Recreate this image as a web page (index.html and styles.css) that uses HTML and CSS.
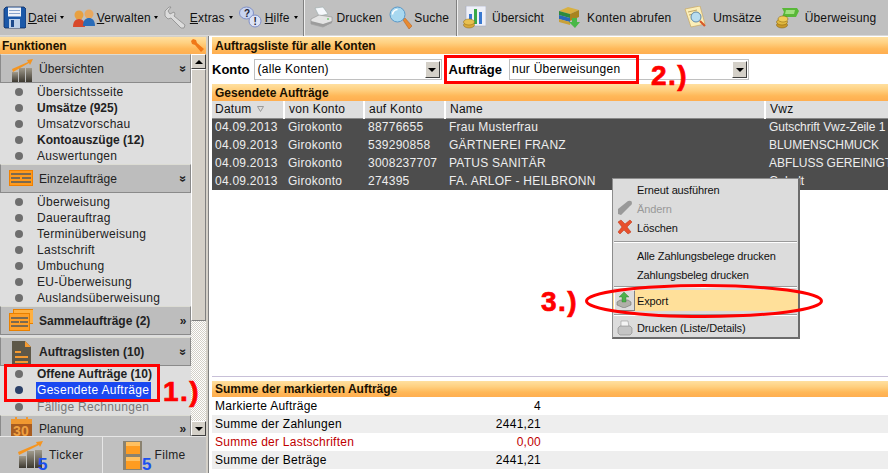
FILE: index.html
```html
<!DOCTYPE html>
<html lang="de">
<head>
<meta charset="utf-8">
<title>Auftragsliste</title>
<link rel="stylesheet" href="styles.css">
</head>
<body>
<div class="app">
  <header class="toolbar">
    <div class="tool t-datei"><svg class="ti" viewBox="0 0 23 23"><path d="M1 3l2-2h18l2 2v18l-1 1H2l-1-1z" fill="#1b58a8" stroke="#0c2c60" stroke-width=".8"/><rect x="5" y="1.500" width="13" height="9" fill="#eef2f8"/><rect x="6" y="4" width="11" height="1" fill="#88a4cc"/><rect x="6" y="7" width="11" height="1" fill="#88a4cc"/><rect x="6" y="13" width="11" height="9" fill="#bcd0e8"/><rect x="8" y="14" width="3" height="7" fill="#1c4a8c"/></svg><span><u>D</u>atei</span><i class="caret"></i></div>
    <div class="tool t-verw"><svg class="ti" viewBox="0 0 23 23"><circle cx="7" cy="9" r="4.500" fill="#e8a040"/><path d="M1 21c0-5 2-8 6-8s6 3 6 8z" fill="#d8482a"/><circle cx="17" cy="8" r="4.500" fill="#e8a860"/><path d="M11 20c0-6 3-8 6-8s6 2 6 8z" fill="#2a6cb8"/></svg><span><u>V</u>erwalten</span><i class="caret"></i></div>
    <div class="tool t-extras"><svg class="ti" viewBox="0 0 23 23"><path d="M1 5l4-4 2 0-3 4 2 3 4-2 1 2-1 2 11 9-1 3-3 0L7 12l-3 1-3-3z" fill="#dcdcdc" stroke="#8a8a8a" stroke-width=".8"/></svg><span><u>E</u>xtras</span><i class="caret"></i></div>
    <div class="tool t-hilfe"><svg class="ti" viewBox="0 0 23 23"><ellipse cx="7.500" cy="7" rx="7" ry="6" fill="#c8d4f0" stroke="#8090c8"/><text x="5" y="11" class="qm">?</text><ellipse cx="16" cy="15" rx="6" ry="6" fill="#dde4f6" stroke="#8090c8"/><text x="14.500" y="19" class="qm">!</text></svg><span><u>H</u>ilfe</span><i class="caret"></i></div>
    <i class="tsep"></i>
    <div class="tool t-druck"><svg class="ti" viewBox="0 0 23 23"><path d="M5 2l8-1 5 7-9 2z" fill="#f6f8fc" stroke="#9aa" stroke-width=".6"/><path d="M1 13l8-4 13 2v5l-9 5-12-3z" fill="#e4e4e4" stroke="#909090" stroke-width=".6"/><path d="M1 15l12 3 9-3v2l-9 4-12-3z" fill="#9c9c9c"/><rect x="17" y="12.500" width="2" height="1" fill="#40c040"/></svg><span>Drucken</span></div>
    <div class="tool t-suche"><svg class="ti" viewBox="0 0 23 23"><path d="M14 14l2-2 7 8-3 3z" fill="#e88a30" stroke="#b05818" stroke-width=".5"/><circle cx="8.500" cy="8.500" r="7.500" fill="#a8d8f0" stroke="#5a98c8"/><path d="M3.500 8.500a5 5 0 0 1 5-5" stroke="#fff" stroke-width="1.500" fill="none"/></svg><span>Suche</span></div>
    <i class="tsep tsep-2"></i>
    <div class="tool t-ueber"><svg class="ti" viewBox="0 0 23 23"><rect x="3" y="0" width="20" height="20" fill="#eef0f8" stroke="#a0a8c0" stroke-width=".6"/><rect x="6" y="8" width="3" height="10" fill="#3878d0"/><rect x="11" y="3" width="3" height="15" fill="#38a848"/><rect x="16" y="6" width="3" height="12" fill="#3878d0"/><ellipse cx="6" cy="19" rx="5.500" ry="3" fill="#d8a838" stroke="#906810" stroke-width=".5"/><ellipse cx="6" cy="16" rx="5.500" ry="3" fill="#e8c050" stroke="#906810" stroke-width=".5"/></svg><span>Übersicht</span></div>
    <div class="tool t-konten"><svg class="ti" viewBox="0 0 23 23"><path d="M1 5l9-4 11 3-9 4z" fill="#d8b040"/><path d="M1 5l11 3v4L1 9z" fill="#2f8a3c"/><path d="M1 9l11 3v4L1 13z" fill="#2a68b8"/><path d="M1 13l11 3v3L1 16z" fill="#c8a038"/><path d="M12 8l9-4v7l-9 4z" fill="#a88420"/><path d="M14 12h5v4h3l-5 6-6-6h3z" fill="#48b848"/></svg><span>Konten abrufen</span></div>
    <div class="tool t-umsatz"><svg class="ti" viewBox="0 0 23 23"><path d="M1 3l15-3 5 18-14 3z" fill="#fbeeb8" stroke="#c8a860" stroke-width=".7"/><path d="M4 6l9-2M5 9l4-1" stroke="#b09050" stroke-width=".8"/><circle cx="12" cy="11" r="5" fill="#b8dcf0" stroke="#6088a8"/><path d="M16 15l5 5" stroke="#d85828" stroke-width="2.200"/></svg><span>Umsätze</span></div>
    <div class="tool t-ueberw"><svg class="ti" viewBox="0 0 23 23"><path d="M6 2h15l2 3-3 6H6l2-5z" fill="#58b838"/><path d="M10 4h9l-1 4H9z" fill="#a0e080"/><ellipse cx="6" cy="19" rx="5.500" ry="3" fill="#c89828" stroke="#805c08" stroke-width=".5"/><ellipse cx="6" cy="16" rx="5.500" ry="3" fill="#e0b840" stroke="#805c08" stroke-width=".5"/><ellipse cx="7" cy="13" rx="5" ry="3" fill="#f0cc58" stroke="#805c08" stroke-width=".5"/></svg><span>Überweisung</span></div>
  </header>

  <div class="main">
    <aside class="side">
      <div class="band side-head"><span>Funktionen</span>
        <svg class="wrench" viewBox="0 0 13 13"><path d="M0 2l2-2 3 1 1 3 7 6-3 3-6-7-3-1z" fill="#f07818"/></svg>
      </div>
      <div class="side-body">
        <div class="nav">
          <div class="sect">
            <svg class="si" viewBox="0 0 24 26"><defs><linearGradient id="bar" x1="0" y1="0" x2="0" y2="1"><stop offset="0" stop-color="#a09a8c"/><stop offset="1" stop-color="#3c3830"/></linearGradient></defs><rect x="3" y="16" width="6" height="10" fill="url(#bar)"/><rect x="10" y="12" width="6" height="14" fill="url(#bar)"/><rect x="17" y="12" width="6" height="14" fill="url(#bar)"/><path d="M3 13L19 6l-1-2 6-1-3 6-1-2L4 16z" fill="#f59520"/></svg>
            <span>Übersichten</span><b class="chev">»</b>
          </div>
          <ul class="items">
            <li>Übersichtsseite</li>
            <li class="strong">Umsätze (925)</li>
            <li>Umsatzvorschau</li>
            <li class="strong">Kontoauszüge (12)</li>
            <li>Auswertungen</li>
          </ul>
          <div class="sect">
            <svg class="si" viewBox="0 0 24 26"><rect x=".5" y="4.500" width="23" height="15" fill="#ff9a1c" stroke="#f08000"/><rect x="2" y="7" width="20" height="2" fill="#7c6a50"/><rect x="2" y="11" width="9" height="2" fill="#7c6a50"/><rect x="13" y="11" width="9" height="2" fill="#7c6a50"/><rect x="2" y="15" width="20" height="2" fill="#7c6a50"/></svg>
            <span>Einzelaufträge</span><b class="chev">»</b>
          </div>
          <ul class="items items-long">
            <li>Überweisung</li>
            <li>Dauerauftrag</li>
            <li>Terminüberweisung</li>
            <li>Lastschrift</li>
            <li>Umbuchung</li>
            <li>EU-Überweisung</li>
            <li>Auslandsüberweisung</li>
          </ul>
          <div class="sect sect-bold">
            <svg class="si" viewBox="0 0 24 26"><rect x="4.500" y="1.500" width="20" height="14" fill="#ffb040" stroke="#e88000"/><rect x=".5" y="5.500" width="20" height="17" fill="#ff9f28" stroke="#e88000"/><rect x="2" y="9" width="17" height="2" fill="#7c6a50"/><rect x="2" y="13" width="8" height="2" fill="#7c6a50"/><rect x="11" y="13" width="8" height="2" fill="#7c6a50"/><rect x="2" y="17" width="17" height="2" fill="#7c6a50"/></svg>
            <span>Sammelaufträge (2)</span><b class="chev flat">»</b>
          </div>
          <div class="sect sect-bold sect-gap">
            <svg class="si" viewBox="0 0 24 26"><path d="M3 2h13l6 6v18H3z" fill="#5e5848"/><path d="M16 2l6 6h-6z" fill="#f59a30"/><rect x="6" y="12" width="6" height="2" fill="#f59a30"/><rect x="6" y="17" width="13" height="2" fill="#f59a30"/><rect x="6" y="22" width="13" height="2" fill="#f59a30"/></svg>
            <span>Auftragslisten (10)</span><b class="chev">»</b>
          </div>
          <ul class="items items-last">
            <li class="strong">Offene Aufträge (10)</li>
            <li class="selected"><span>Gesendete Aufträge</span></li>
            <li class="muted">Fällige Rechnungen</li>
          </ul>
          <div class="sect sect-cut">
            <svg class="si si-cal" viewBox="0 0 24 26"><rect x="2" y="3" width="21" height="23" fill="#a85c20"/><rect x="2" y="3" width="21" height="5" fill="#f09830"/><rect x="6" y="1" width="2" height="4" fill="#f09830"/><rect x="17" y="1" width="2" height="4" fill="#f09830"/><text x="4" y="20" class="cal">30</text></svg>
            <span>Planung</span><b class="chev flat">»</b>
          </div>
        </div>
        <div class="sbar">
          <div class="sbtn"><i class="up"></i></div>
          <div class="thumb"></div>
          <div class="track"></div>
          <div class="sbtn"><i class="down"></i></div>
        </div>
      </div>
      <div class="tabs">
        <div class="tab tab-a">
          <svg class="tabi" viewBox="0 0 30 32"><defs><linearGradient id="bar2" x1="0" y1="0" x2="0" y2="1"><stop offset="0" stop-color="#a09a8c"/><stop offset="1" stop-color="#3c3830"/></linearGradient></defs><rect x="1" y="17" width="7" height="12" fill="url(#bar2)"/><rect x="9" y="12" width="7" height="17" fill="url(#bar2)"/><rect x="17" y="11" width="7" height="18" fill="url(#bar2)"/><path d="M0 13L19 5l-1-2 7-1-3 6-1-2L1 16z" fill="#f59520"/><text x="20" y="31" class="five">5</text></svg>
          <span>Ticker</span>
        </div>
        <div class="tab tab-b">
          <svg class="tabi" viewBox="0 0 30 32"><rect x="0" y="2" width="19" height="29" fill="#8a8270"/><rect x="3" y="3" width="14" height="12" fill="#ff9c20"/><rect x="3" y="3" width="14" height="4" fill="#ffc060"/><rect x="3" y="18" width="14" height="12" fill="#ff9c20"/><rect x="3" y="18" width="14" height="4" fill="#ffc060"/><text x="19" y="31" class="five">5</text></svg>
          <span>Filme</span>
        </div>
      </div>
    </aside>

    <div class="split"></div>

    <main class="content">
      <div class="band">Auftragsliste für alle Konten</div>
      <div class="filter">
        <label class="flabel lab-k">Konto</label>
        <div class="combo combo-k"><span>(alle Konten)</span><i class="cbtn"></i></div>
        <label class="flabel lab-a">Aufträge</label>
        <div class="combo combo-a"><span>nur Überweisungen</span><i class="cbtn"></i></div>
      </div>
      <div class="band">Gesendete Aufträge</div>
      <table class="grid">
        <colgroup><col class="c1"><col class="c2"><col class="c3"><col class="c4"><col class="c5"></colgroup>
        <thead>
          <tr><th>Datum <svg class="sort" viewBox="0 0 7 6"><path d="M.5.500h6l-3 5z" fill="none" stroke="#999"/></svg></th><th>von Konto</th><th>auf Konto</th><th>Name</th><th>Vwz</th></tr>
        </thead>
        <tbody>
          <tr><td>04.09.2013</td><td>Girokonto</td><td>88776655</td><td>Frau Musterfrau</td><td>Gutschrift Vwz-Zeile 1</td></tr>
          <tr><td>04.09.2013</td><td>Girokonto</td><td>539290858</td><td>GÄRTNEREI FRANZ</td><td>BLUMENSCHMUCK</td></tr>
          <tr><td>04.09.2013</td><td>Girokonto</td><td>3008237707</td><td>PATUS SANITÄR</td><td>ABFLUSS GEREINIGT</td></tr>
          <tr><td>04.09.2013</td><td>Girokonto</td><td>274395</td><td>FA. ARLOF - HEILBRONN</td><td>Gehalt</td></tr>
        </tbody>
      </table>
      <div class="blank"></div>
      <div class="rule"></div>
      <div class="band band-sum">Summe der markierten Aufträge</div>
      <div class="sum">
        <div class="srow"><span>Markierte Aufträge</span><span class="val">4</span></div>
        <div class="srow alt"><span>Summe der Zahlungen</span><span class="val">2441,21</span></div>
        <div class="srow red"><span>Summe der Lastschriften</span><span class="val">0,00</span></div>
        <div class="srow alt"><span>Summe der Beträge</span><span class="val">2441,21</span></div>
      </div>
    </main>
  </div>

  <div class="menu">
    <div class="mi"><span>Erneut ausführen</span></div>
    <div class="mi off"><svg class="mic" viewBox="0 0 16 16"><path d="M1 14V9L11 1q4-1 4 2q0 2-2 3L4 15z" fill="#999"/></svg><span>Ändern</span></div>
    <div class="mi"><svg class="mic" viewBox="0 0 16 16"><path d="M1 3l3-2 4 4 5-4 2 2-5 5 4 5-3 2-4-4-4 4-2-2 4-5z" fill="#e8502c" stroke="#b83010" stroke-width=".5"/></svg><span>Löschen</span></div>
    <div class="msep s1"></div>
    <div class="mi"><span>Alle Zahlungsbelege drucken</span></div>
    <div class="mi"><span>Zahlungsbeleg drucken</span></div>
    <div class="msep s2"></div>
    <div class="mi hot"><i class="mbox"><svg class="mic" viewBox="0 0 16 16"><path d="M1 10l3-2h8l3 2v3l-7 3-7-3z" fill="#b0b0a8" stroke="#666" stroke-width=".5"/><path d="M8 0l5 5h-3v5H6V5H3z" fill="#4cb04c" stroke="#2a7a2a" stroke-width=".4"/></svg></i><span>Export</span></div>
    <div class="msep s3"></div>
    <div class="mi last"><svg class="mic" viewBox="0 0 16 16"><path d="M4 1h7l1 6H4z" fill="#f4f4f4" stroke="#888" stroke-width=".5"/><path d="M1 8l2-2h10l2 2v5l-2 2H3l-2-2z" fill="#c4c4c4" stroke="#777" stroke-width=".5"/></svg><span>Drucken (Liste/Details)</span></div>
  </div>

  <div class="mark mark-1"></div>
  <div class="mark mark-2"></div>
  <svg class="mark-3" viewBox="0 0 240 36"><ellipse cx="120" cy="18" rx="117.500" ry="15.500" fill="none" stroke="#f00" stroke-width="3"/></svg>
  <div class="step step-1">1.)</div>
  <div class="step step-2">2.)</div>
  <div class="step step-3">3.)</div>
</div>
</body>
</html>
```

FILE: styles.css
```css
* { box-sizing: border-box; }
html, body { margin: 0; padding: 0; height: 100%; overflow: hidden; }
body { font: 12px "Liberation Sans", Arial, sans-serif; color: #000; background: #fff; }
.app { position: relative; width: 888px; height: 473px; display: flex; flex-direction: column; overflow: hidden; }

/* toolbar */
.toolbar { height: 36px; flex: none; background: #c0c0c0; border-bottom: 1px solid #d8d8d8; display: flex; align-items: center; padding-left: 3px; font-size: 12px; letter-spacing: .15px; color: #111; white-space: nowrap; }
.tool { display: flex; align-items: center; gap: 2px; flex: none; }
.ti { width: 23px; height: 23px; flex: none; }
.caret { width: 0; height: 0; border: 2.500px solid transparent; border-top: 3px solid #000; border-bottom: 0; margin-left: 1px; }
.tsep { width: 2px; height: 36px; background: linear-gradient(90deg, #808080 50%, #eee 50%); flex: none; margin-left: 5px; }
.tsep-2 { margin-left: 7px; }
.t-verw { margin-left: 8px; }
.t-extras { margin-left: 6px; gap: 3px; }
.t-hilfe { margin-left: 6px; gap: 3px; }
.t-druck { margin-left: 5px; gap: 4px; }
.t-suche { margin-left: 7px; gap: 2px; }
.t-ueber { margin-left: 5px; gap: 6px; }
.t-konten { margin-left: 14px; gap: 6px; }
.t-umsatz { margin-left: 13px; gap: 6px; }
.t-ueberw { margin-left: 14px; gap: 6px; }
.qm { font: bold 10px "Liberation Sans", sans-serif; fill: #223; }
.cal { font: bold 14px "Liberation Sans", sans-serif; fill: #f0a040; }
.five { font: bold 17px "Liberation Sans", sans-serif; fill: #1a50f0; }

/* layout */
.main { flex: 1; min-height: 0; display: flex; background: #fff; }
.side { width: 206px; flex: none; display: flex; flex-direction: column; background: #d4d0c8; }
.split { width: 6px; flex: none; background: linear-gradient(90deg, #d4d0c8 0 2px, #808080 2px 3px, #fff 3px); }
.content { flex: 1; min-width: 0; display: flex; flex-direction: column; padding-top: 1px; }

/* bands */
.band { height: 17px; flex: none; padding-left: 3px; font-weight: bold; font-size: 12px; line-height: 18px; background: linear-gradient(180deg, #ffe0a0 0%, #ffd080 35%, #ffb858 70%, #ffae50 100%); color: #1a1000; }
.side-head { margin-top: 1px; display: flex; justify-content: space-between; align-items: center; padding-left: 2px; padding-right: 2px; }
.wrench { width: 13px; height: 13px; }

/* sidebar */
.side-body { flex: 1; min-height: 0; display: flex; }
.nav { width: 191px; flex: none; background: #dedede; overflow: hidden; }
.sect { height: 29px; background: #bdbdbd; border: 1px solid #8a8a8a; border-top-color: #dcdcd4; display: flex; align-items: center; font-size: 12px; letter-spacing: .1px; color: #222; padding-left: 8px; }
.sect span { flex: 1; padding-left: 6px; }
.si { width: 24px; height: 26px; flex: none; }
.chev { display: inline-block; transform: rotate(90deg); font-size: 12px; width: 10px; line-height: 10px; text-align: center; margin-right: 2px; }
.chev.flat { transform: none; }
.sect-bold { font-weight: bold; letter-spacing: 0; }
.sect-gap { margin-top: 2px; }
.sect-cut { height: 27px; margin-top: 0; border-bottom: 0; }
.items { list-style: none; margin: 0; padding: 1px 0 0 37px; height: 81px; }
.items-long { height: 113px; }
.items-last { height: 49px; padding-top: 0; }
.items li { height: 16px; line-height: 16px; position: relative; letter-spacing: .3px; color: #222; white-space: nowrap; }
.items li::before { content: ""; position: absolute; left: -22px; top: 4px; width: 8px; height: 8px; border-radius: 50%; background: #6e6e6e; }
.items .strong { font-weight: bold; letter-spacing: 0; }
.items .muted { color: #777; }
.items .selected { height: 17px; color: #fff; }
.items .selected span { display: inline-block; background: #1a48f0; padding: 0 2px 0 1px; margin-left: -1px; height: 17px; }
.items .selected::before { background: #2c4068; }

/* scrollbar */
.sbar { width: 15px; flex: none; display: flex; flex-direction: column; background: #d4d0c8; }
.sbtn { height: 15px; flex: none; background: #d4d0c8; border: 1px solid; border-color: #fff #404040 #404040 #fff; display: flex; align-items: center; justify-content: center; }
.up { border: 4px solid transparent; border-bottom: 4px solid #000; border-top: 0; width: 0; height: 0; }
.down { border: 4px solid transparent; border-top: 4px solid #000; border-bottom: 0; width: 0; height: 0; }
.thumb { height: 252px; flex: none; background: #d4d0c8; border: 1px solid; border-color: #fff #808080 #808080 #fff; }
.track { flex: 1; background: repeating-conic-gradient(#fff 0 25%, #d4d0c8 0 50%) 0 0 / 2px 2px; }

/* tabs */
.tabs { height: 37px; flex: none; display: flex; background: #c0c0c0; font-size: 12px; letter-spacing: .35px; color: #222; }
.tab { flex: 1; display: flex; align-items: center; border-top: 1px solid #e6e6e6; white-space: nowrap; }
.tab-a { padding-left: 18px; gap: 1px; }
.tab-b { padding-left: 20px; gap: 2px; border-left: 1px solid #e6e6e6; }
.tabi { width: 30px; height: 32px; flex: none; overflow: visible; }

/* filter */
.filter { height: 30px; flex: none; display: flex; align-items: center; font-size: 13px; }
.flabel { font-weight: bold; }
.combo { height: 21px; border: 1px solid; border-color: #404040 #fff #fff #404040; background: #fff; outline: 1px solid #c0c0c0; outline-offset: -1px; display: flex; align-items: center; justify-content: space-between; padding-left: 3px; font-size: 12px; letter-spacing: .25px; }
.combo-k { width: 188px; margin-left: 4px; }
.lab-a { margin-left: 7px; }
.combo-a { width: 240px; margin-left: 7px; padding-left: 2px; }
.cbtn { width: 15px; height: 17px; background: #d4d0c8; border: 1px solid; border-color: #fff #404040 #404040 #fff; position: relative; margin-right: 1px; }
.cbtn::after { content: ""; position: absolute; left: 2.500px; top: 6px; border: 4px solid transparent; border-top: 4px solid #000; border-bottom: 0; }

/* grid */
.grid { border-collapse: collapse; table-layout: fixed; width: 676px; flex: none; letter-spacing: .25px; }
.c1 { width: 72px; } .c2 { width: 80px; } .c3 { width: 81px; } .c4 { width: 320px; } .c5 { width: 123px; }
.grid th { height: 17px; padding: 0 0 0 4px; font-weight: normal; text-align: left; background: #dedede; border-right: 2px solid #fff; border-bottom: 1px solid #888; color: #111; overflow: hidden; white-space: nowrap; }
.grid th:last-child { border-right: 0; }
.grid th:first-child, .grid td:first-child { padding-left: 3px; }
.grid td:last-child { letter-spacing: -.05px; }
.sort { width: 7px; height: 6px; margin-left: 2px; vertical-align: 1px; }
.grid td { height: 18px; padding: 0 0 0 4px; background: #4d4d4d; color: #eee; overflow: hidden; white-space: nowrap; }
.blank { flex: 1; min-height: 0; }
.rule { height: 1px; flex: none; background: #c8c0d8; margin-bottom: 4px; }
.band-sum { height: 16px; line-height: 16px; }

/* summary */
.sum { flex: none; height: 76px; letter-spacing: .25px; }
.srow { height: 18px; display: flex; padding-left: 3px; line-height: 18px; }
.srow .val { margin-left: auto; width: 60px; text-align: right; margin-right: 347px; }
.alt { background: #eeeeee; }
.red { color: #c00000; }

/* context menu */
.menu { position: absolute; z-index: 2; left: 612px; top: 178px; width: 188px; height: 161px; background: #dcdcdc; border: 1px solid #8c8c8c; border-right: 2px solid #6c6c6c; border-bottom: 2px solid #6c6c6c; font-size: 11px; padding-top: 1px; letter-spacing: -.12px; }
.mi { height: 19px; display: flex; align-items: center; padding-left: 24px; position: relative; color: #111; }
.mi.last { height: 18px; }
.mic { position: absolute; left: 4px; top: 1px; width: 16px; height: 16px; }
.off { color: #999; }
.msep { height: 1px; background: #9a9a9a; box-shadow: 0 1px 0 #fff; margin-left: 1px; margin-right: 1px; }
.s1 { margin-top: 4px; margin-bottom: 4px; }
.s2 { margin-top: 2px; margin-bottom: 3px; }
.s3 { margin-top: 3px; margin-bottom: 4px; }
.hot { background: #ffe09a; height: 21px; }
.mbox { position: absolute; left: 1px; top: 0; width: 21px; height: 21px; background: #dcdcdc; border: 1px solid; border-color: #fff #808080 #808080 #fff; }
.mbox .mic { left: 1px; top: 1px; }

/* annotations */
.mark { position: absolute; z-index: 3; border: 3px solid #f00; }
.mark-1 { left: 4px; top: 364px; width: 156px; height: 38px; }
.mark-2 { left: 444px; top: 55px; width: 195px; height: 29px; }
.mark-3 { position: absolute; z-index: 3; left: 584px; top: 283px; width: 240px; height: 36px; }
.step { position: absolute; z-index: 3; color: #f00; font: bold 28px/32px "Liberation Sans", Arial, sans-serif; letter-spacing: 1.500px; -webkit-text-stroke: .7px #f00; }
.step-1 { left: 163px; top: 376px; }
.step-2 { left: 651px; top: 60px; }
.step-3 { left: 541px; top: 286px; }
```
